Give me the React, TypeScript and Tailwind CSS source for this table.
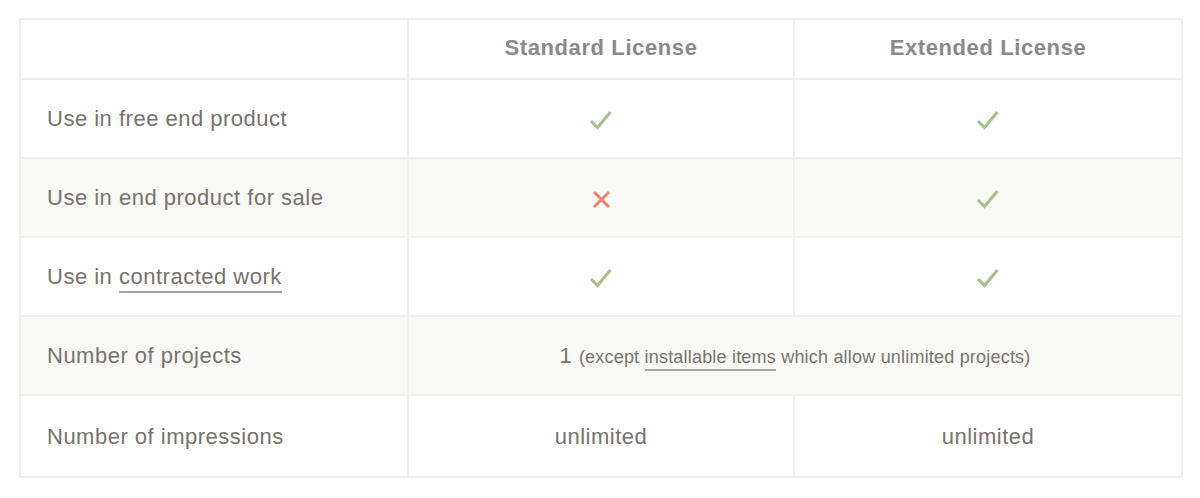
import React from "react";

const Check = () => (
  <svg width="24" height="22" viewBox="0 0 24 22" className="inline-block">
    <path d="M2 12 L8.5 18.5 L21.5 3" fill="none" stroke="#a8bf8a" strokeWidth="3" />
  </svg>
);

const Cross = () => (
  <svg width="19" height="19" viewBox="0 0 19 19" className="inline-block">
    <path d="M2 2 L17 17 M17 2 L2 17" fill="none" stroke="#e98671" strokeWidth="3" />
  </svg>
);

const td = "border-2 border-[#efefec] h-[79px]";

export default function App() {
  return (
    <div className="w-[1200px] h-[498px] bg-white pt-[18px] px-[19px]" style={{ fontFamily: '"Liberation Sans", Arial, sans-serif' }}>
      <table className="w-[1162px] border-collapse table-fixed text-[22px] tracking-[0.5px] text-[#77736c]">
        <colgroup>
          <col className="w-[388px]" />
          <col className="w-[386px]" />
          <col className="w-[388px]" />
        </colgroup>
        <thead>
          <tr className="h-[60px]">
            <th className="border-2 border-[#efefec]"></th>
            <th className="border-2 border-[#efefec] text-center font-bold text-[#8b8a86] tracking-[0.6px] pb-[3px]">Standard License</th>
            <th className="border-2 border-[#efefec] text-center font-bold text-[#8b8a86] tracking-[0.6px] pb-[3px]">Extended License</th>
          </tr>
        </thead>
        <tbody>
          <tr className="bg-white">
            <td className={`${td} pl-[26px]`}>Use in free end product</td>
            <td className={`${td} text-center`}><Check /></td>
            <td className={`${td} text-center`}><Check /></td>
          </tr>
          <tr className="bg-[#f9f9f7]">
            <td className={`${td} pl-[26px]`}>Use in end product for sale</td>
            <td className={`${td} text-center`}><Cross /></td>
            <td className={`${td} text-center`}><Check /></td>
          </tr>
          <tr className="bg-white">
            <td className={`${td} pl-[26px]`}>
              Use in <span className="border-b-2 border-[#a9a6a0] pb-[2px]">contracted work</span>
            </td>
            <td className={`${td} text-center`}><Check /></td>
            <td className={`${td} text-center`}><Check /></td>
          </tr>
          <tr className="bg-[#f9f9f7]">
            <td className={`${td} pl-[26px]`}>Number of projects</td>
            <td className={`${td} text-center`} colSpan={2}>
              1{" "}
              <span className="text-[18px] tracking-[0.2px]">
                (except <span className="border-b-2 border-[#a9a6a0] pb-[2px]">installable items</span> which allow unlimited projects)
              </span>
            </td>
          </tr>
          <tr className="bg-white">
            <td className={`${td} h-[82px] pl-[26px]`}>Number of impressions</td>
            <td className={`${td} h-[82px] text-center`}>unlimited</td>
            <td className={`${td} h-[82px] text-center`}>unlimited</td>
          </tr>
        </tbody>
      </table>
    </div>
  );
}
